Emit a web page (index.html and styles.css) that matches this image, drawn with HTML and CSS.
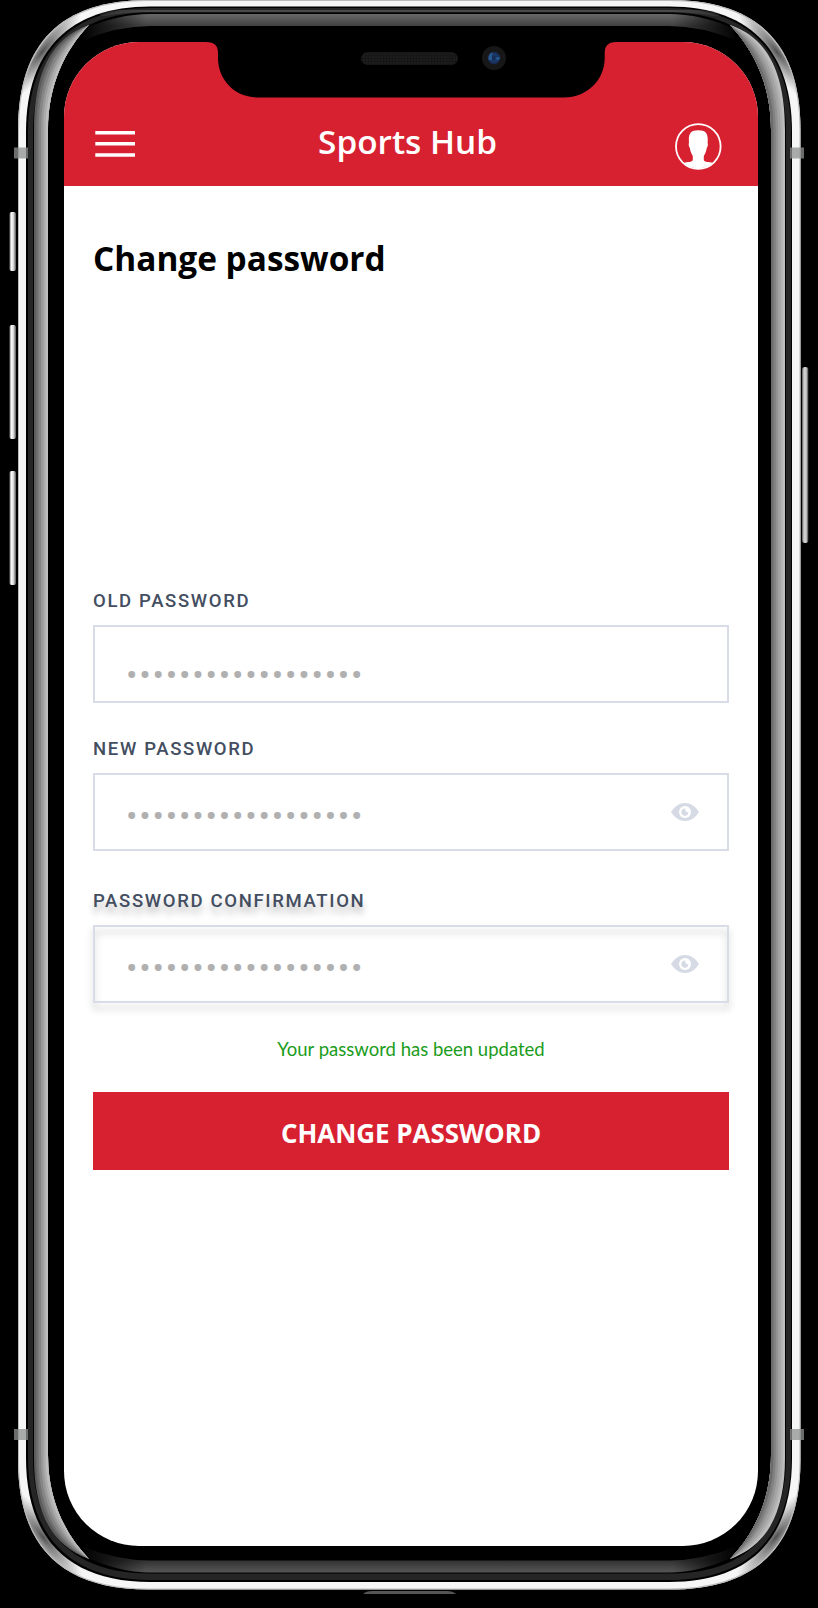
FILE: index.html
```html
<!DOCTYPE html>
<html lang="en">
<head>
<meta charset="utf-8">
<title>Sports Hub</title>
<link rel="stylesheet" href="styles.css">
</head>
<body>
<div class="device">
  <svg class="device-frame" viewBox="0 0 818 1608" aria-hidden="true">
    <defs>
      <linearGradient id="key" x1="0" x2="1" y1="0" y2="0"><stop offset="0" stop-color="#777"/><stop offset=".3" stop-color="#fafafa"/><stop offset=".6" stop-color="#dcdcdc"/><stop offset="1" stop-color="#555"/></linearGradient>
      <linearGradient id="keyRight" x1="0" x2="1" y1="0" y2="0"><stop offset="0" stop-color="#555"/><stop offset=".3" stop-color="#d0d0d0"/><stop offset=".65" stop-color="#ccc"/><stop offset="1" stop-color="#333"/></linearGradient>
      <linearGradient id="glassTop" x1="0" x2="0" y1="14" y2="26" gradientUnits="userSpaceOnUse"><stop offset="0" stop-color="#686868"/><stop offset="1" stop-color="#414141"/></linearGradient>
      <linearGradient id="glassBottom" x1="0" x2="0" y1="1560" y2="1573" gradientUnits="userSpaceOnUse"><stop offset="0" stop-color="#303030"/><stop offset="1" stop-color="#585858"/></linearGradient>
      <linearGradient id="fade" x1="80" x2="739" y1="0" y2="0" gradientUnits="userSpaceOnUse"><stop offset="0" stop-color="#000"/><stop offset=".1" stop-color="#fff"/><stop offset=".9" stop-color="#fff"/><stop offset="1" stop-color="#000"/></linearGradient>
      <mask id="ends"><rect width="818" height="1608" fill="url(#fade)"/></mask>
      <radialGradient id="shade"><stop offset="0" stop-color="#333" stop-opacity=".85"/><stop offset=".4" stop-color="#555" stop-opacity=".55"/><stop offset="1" stop-color="#777" stop-opacity="0"/></radialGradient>
      <radialGradient id="lens"><stop offset="0" stop-color="#152347"/><stop offset=".55" stop-color="#1b3a6d"/><stop offset="1" stop-color="#15233d"/></radialGradient>
      <pattern id="mesh" width="3" height="3" patternUnits="userSpaceOnUse"><rect width="3" height="3" fill="#1c1c1c"/><path d="M0 0H3M0 0V3" stroke="#111"/></pattern>
      <clipPath id="rim"><path d="M18 130C18 43 61 0 148 0H670C757 0 800.5 43 800.5 130V1460C800.5 1546 757 1589.500 670 1589.500H148C61 1589.500 18 1546 18 1460Z"/></clipPath>
      <path id="b0" d="M89 25C50 38 34 75 34 130V1458C34 1510 50 1545 89 1559C65 1534 48 1500 48 1455V130C48 85 65 50 89 25Z"/>
      <path id="b1" d="M89 25C53 40 36.300 77 36.300 130V1458C36.300 1508 53 1543 89 1559C65 1534 48 1500 48 1455V130C48 85 65 50 89 25Z"/>
      <path id="b2" d="M89 25C55 42 38.600 79 38.600 130V1458C38.600 1506 55 1541 89 1559C65 1534 48 1500 48 1455V130C48 85 65 50 89 25Z"/>
      <path id="b3" d="M89 25C58 44 41 81 41 130V1458C41 1504 58 1539 89 1559C65 1534 48 1500 48 1455V130C48 85 65 50 89 25Z"/>
      <path id="b4" d="M89 25C60 46 43.300 82 43.300 130V1458C43.300 1502 60 1537 89 1559C65 1534 48 1500 48 1455V130C48 85 65 50 89 25Z"/>
      <path id="b5" d="M89 25C63 48 45.600 84 45.600 130V1458C45.600 1501 63 1535 89 1559C65 1534 48 1500 48 1455V130C48 85 65 50 89 25Z"/>
    </defs>

    <!-- side keys -->
    <rect x="9.500" y="212" width="6.500" height="59" rx="2" fill="url(#key)"/>
    <rect x="9.500" y="325" width="6.500" height="114" rx="2" fill="url(#key)"/>
    <rect x="9.500" y="471" width="6.500" height="114" rx="2" fill="url(#key)"/>
    <rect x="802" y="367" width="6.500" height="176" rx="3" fill="url(#keyRight)"/>
    <path d="M363 1594Q366 1591 372 1591H447Q453 1591 456 1594Z" fill="#555"/>

    <!-- polished rim -->
    <g clip-path="url(#rim)">
      <rect width="818" height="1608" fill="#f6f6f6"/>
      <ellipse cx="42" cy="52" rx="16" ry="62" fill="url(#shade)" transform="rotate(38 42 52)"/>
      <ellipse cx="777" cy="52" rx="16" ry="62" fill="url(#shade)" transform="rotate(-38 777 52)"/>
      <ellipse cx="43" cy="1537" rx="16" ry="62" fill="url(#shade)" transform="rotate(-38 43 1537)"/>
      <ellipse cx="776" cy="1537" rx="16" ry="62" fill="url(#shade)" transform="rotate(38 776 1537)"/>
      <path d="M18 130C18 43 61 0 148 0H670C757 0 800.500 43 800.500 130V1460C800.500 1546 757 1589.500 670 1589.500H148C61 1589.500 18 1546 18 1460Z" fill="none" stroke="#bbb" stroke-width="2"/>
    </g>
    <path d="M26 132C26 50 70 6.500 150 6.500H669C749 6.500 792 50 792 132V1458C792 1540 749 1582 669 1582H150C70 1582 26 1540 26 1458Z" fill="#000"/>
    <path d="M28 132C28 52 72 8 150 8H669C747 8 791 52 791 132V1458C791 1538 747 1580 669 1580H150C72 1580 28 1538 28 1458Z" fill="#252525"/>
    <path d="M100 15Q125 10 150 10H669Q694 10 719 15" fill="none" stroke="#4a4a4a" stroke-width="4" mask="url(#ends)"/>
    <path d="M33 132C33 55 75 12.500 150 12.500H669C744 12.500 786 55 786 132V1458C786 1535 744 1573.500 669 1573.500H150C75 1573.500 33 1535 33 1458Z" fill="#000"/>
    <g mask="url(#ends)">
      <path d="M84 29Q118 14 150 14H669Q701 14 735 29V40Q701 26 669 26H150Q118 26 84 40Z" fill="url(#glassTop)"/>
      <path d="M84 1556Q118 1572.500 150 1572.500H669Q701 1572.500 735 1556V1547Q701 1560.500 669 1560.500H150Q118 1560.500 84 1547Z" fill="url(#glassBottom)"/>
    </g>
    <g>
      <use href="#b0" fill="#5c5c5c"/><use href="#b1" fill="#707070"/><use href="#b2" fill="#858585"/><use href="#b3" fill="#999"/><use href="#b4" fill="#acacac"/><use href="#b5" fill="#bebebe"/>
    </g>
    <g transform="matrix(-1 0 0 1 819 0)">
      <use href="#b0" fill="#bebebe"/><use href="#b1" fill="#b0b0b0"/><use href="#b2" fill="#a2a2a2"/><use href="#b3" fill="#929292"/><use href="#b4" fill="#808080"/><use href="#b5" fill="#6c6c6c"/>
    </g>

    <!-- antenna bands -->
    <g fill="#8f9090" fill-opacity=".75">
      <rect x="14" y="147.500" width="14" height="11"/><rect x="790" y="147.500" width="14" height="11"/>
      <rect x="14" y="1429" width="14" height="11"/><rect x="790" y="1429" width="14" height="11"/>
    </g>
  </svg>

  <main class="screen">
    <header class="app-bar">
      <button class="menu" aria-label="Menu"><svg class="menu-icon" viewBox="0 0 40 28"><path d="M.3 3.800H40M.3 14.800H40M.3 25.900H40" stroke="#fff" stroke-width="3.500"/></svg></button>
      <h1 class="brand">Sports Hub</h1>
      <svg class="avatar" viewBox="0 0 48 48" aria-hidden="true">
        <circle cx="24.300" cy="23.500" r="22.300" fill="none" stroke="#fff" stroke-width="1.800"/>
        <path transform="translate(.3 -.5)" fill="#fff" d="M9.500 40.500C13 39 18 40 18.500 37.500V33.500C16.500 30.500 16 28 15.600 25.500C14.500 24.500 14 21 14.700 20.500C14 12 15.500 7.800 24 7.800S34 12 33.300 20.500C34 21 33.500 24.500 32.400 25.500C32 28 31.500 30.500 29.500 33.500V37.500C30 40 35 39 38.500 40.500A22.500 22.500 0 0 1 9.500 40.500Z"/>
      </svg>
    </header>

    <form class="form">
      <h2 class="title">Change password</h2>
      <div class="field">
        <label class="label">OLD PASSWORD</label>
        <div class="box box-low"><span class="dots">••••••••••••••••••</span></div>
      </div>
      <div class="field">
        <label class="label">NEW PASSWORD</label>
        <div class="box"><span class="dots">••••••••••••••••••</span>
          <svg class="eye" viewBox="0 0 28 18"><path fill="#d5dae4" d="M0 9C4 3 8.500 0 14 0S24 3 28 9C24 15 19.500 18 14 18S4 15 0 9Z"/><circle cx="14" cy="9" r="6" fill="#fff"/><path fill="#d5dae4" d="M14.500 5.500A2.500 2.500 0 0 0 17.500 9A3.600 3.600 0 1 1 14.500 5.500Z"/></svg>
        </div>
      </div>
      <div class="field field-active">
        <label class="label">PASSWORD CONFIRMATION</label>
        <div class="box"><span class="dots">••••••••••••••••••</span>
          <svg class="eye" viewBox="0 0 28 18"><path fill="#d5dae4" d="M0 9C4 3 8.500 0 14 0S24 3 28 9C24 15 19.500 18 14 18S4 15 0 9Z"/><circle cx="14" cy="9" r="6" fill="#fff"/><path fill="#d5dae4" d="M14.500 5.500A2.500 2.500 0 0 0 17.500 9A3.600 3.600 0 1 1 14.500 5.500Z"/></svg>
        </div>
      </div>
      <p class="notice">Your password has been updated</p>
      <button class="submit" type="button">CHANGE PASSWORD</button>
    </form>
  </main>

  <svg class="notch" viewBox="0 0 410 58" aria-hidden="true">
    <path d="M0 0H410V2C402 2 398.700 6 398.700 13V18C398.700 40 381 57.500 358 57.500H52C29 57.500 12 40 12 18V13C12 6 9 2 0 2Z" fill="#000"/>
    <rect x="155" y="12" width="97" height="13" rx="6.500" fill="url(#mesh)"/>
    <circle cx="288" cy="18" r="12" fill="#171717"/>
    <circle cx="288" cy="18" r="6.500" fill="url(#lens)"/>
    <path d="M282.500 20Q282 13 287 12.500Q285 16 286 20ZM289 18L294 17Q294 20 291 20Z" fill="#28598f"/>
  </svg>
</div>
</body>
</html>
```
FILE: styles.css
```css
* { box-sizing: border-box; }
body { margin: 0; background: #000; }
button { border: 0; padding: 0; font: inherit; }

.device { position: relative; width: 818px; height: 1608px; padding: 42px 60px 0 64px; overflow: hidden; }
.device-frame { position: absolute; inset: 0; width: 818px; height: 1608px; }
.notch { position: absolute; left: 206px; top: 40px; width: 410px; height: 58px; }

.screen { position: relative; width: 694px; height: 1503.500px; background: #fff; border-radius: 75px; overflow: hidden; }

.app-bar { height: 144px; padding: 81px 36px 0 31px; display: grid; grid-template-columns: 48px 1fr 48px; align-items: start; background: #d82130; color: #fff; }
.menu { width: 40px; padding-top: 6px; background: none; }
.menu-icon { display: block; width: 40px; height: 28px; }
.brand { margin: -7px 2px 0 0; font: 550 33.350px/50px "Open Sans", sans-serif; text-align: center; }
.avatar { width: 48px; height: 48px; }

.form { padding: 47px 29px 0; display: flex; flex-direction: column; }
.title { margin: 0 0 303px; height: 50px; font: 700 33.400px/50px "Open Sans", sans-serif; color: #000; }
.field { height: 148px; }
.field-active { margin-top: 4px; }
.label { display: block; height: 39px; font: 500 18.550px/30px Roboto, sans-serif; letter-spacing: 1.650px; color: #434e61; }
.box { position: relative; height: 78px; padding: 0 28px 0 31px; display: flex; align-items: center; justify-content: space-between; }
.box::before { content: ""; position: absolute; inset: 0; border: 2px solid #d8dce6; }
.dots { padding: 8px 0 0 2px; font: 400 34px/30px Roboto, sans-serif; letter-spacing: 1.770px; color: #b0b0b0; }
.box-low .dots { padding-top: 22px; }
.eye { width: 28px; height: 18px; margin-right: 2px; }
.field-active .label { text-shadow: 0 7px 7px rgba(0, 0, 0, .25); }
.field-active .box::before { filter: drop-shadow(0 6.500px 3.700px rgba(0, 0, 0, .23)); }
.notice { margin: 0 0 28px; font: 400 18.500px/30px Lato, sans-serif; color: #1a9c1a; text-align: center; }
.submit { height: 78px; padding-top: 4px; background: #d82130; color: #fff; font: 700 25.950px/74px "Open Sans", sans-serif; }
```
